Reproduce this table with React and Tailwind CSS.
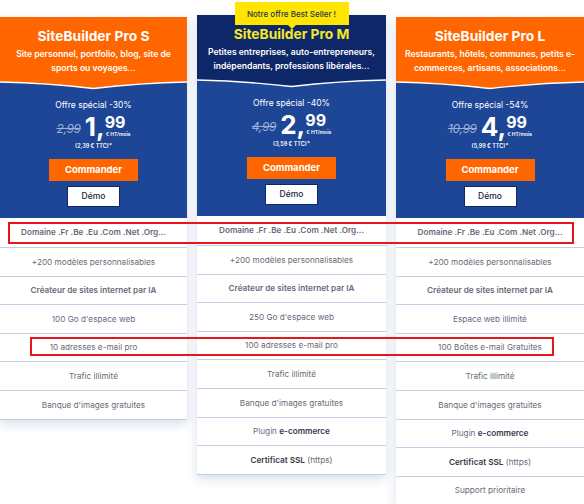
import React from "react";

const plans = [
  {
    title: "SiteBuilder Pro S",
    sub: ["Site personnel, portfolio, blog, site de", "sports ou voyages..."],
    head: "bg-[#ff6600]",
    headFill: "#ff6600",
    titleColor: "text-white",
    offer: "Offre spécial -30%",
    old: "2,99",
    int: "1",
    dec: "99",
    ttc: "(2,39 € TTC)*",
    w: "w-[187px]",
    mt: "mt-[17px]",
    features: [
      { t: "Domaine .Fr .Be .Eu .Com .Net .Org...", b: true },
      { t: "+200 modèles personnalisables" },
      { t: "Créateur de sites internet par IA", b: true },
      { t: "100 Go d'espace web" },
      { t: "10 adresses e-mail pro" },
      { t: "Trafic illimité" },
      { t: "Banque d'images gratuites" },
    ],
  },
  {
    title: "SiteBuilder Pro M",
    sub: ["Petites entreprises, auto-entrepreneurs,", "indépendants, professions libérales..."],
    head: "bg-[#0e2768]",
    headFill: "#0e2768",
    titleColor: "text-[#f6e827]",
    offer: "Offre spécial -40%",
    old: "4,99",
    int: "2",
    dec: "99",
    ttc: "(3,59 € TTC)*",
    w: "w-[189px]",
    mt: "mt-[15px]",
    badge: true,
    features: [
      { t: "Domaine .Fr .Be .Eu .Com .Net .Org...", b: true },
      { t: "+200 modèles personnalisables" },
      { t: "Créateur de sites internet par IA", b: true },
      { t: "250 Go d'espace web" },
      { t: "100 adresses e-mail pro" },
      { t: "Trafic illimité" },
      { t: "Banque d'images gratuites" },
      { t: "Plugin ", bt: "e-commerce" },
      { bp: "Certificat SSL", t: " (https)" },
    ],
  },
  {
    title: "SiteBuilder Pro L",
    sub: ["Restaurants, hôtels, communes, petits e-", "commerces, artisans, associations..."],
    head: "bg-[#ff6600]",
    headFill: "#ff6600",
    titleColor: "text-white",
    offer: "Offre spécial -54%",
    old: "10,99",
    int: "4",
    dec: "99",
    ttc: "(5,99 € TTC)*",
    w: "w-[188px]",
    mt: "mt-[17px]",
    features: [
      { t: "Domaine .Fr .Be .Eu .Com .Net .Org...", b: true },
      { t: "+200 modèles personnalisables" },
      { t: "Créateur de sites internet par IA", b: true },
      { t: "Espace web illimité" },
      { t: "100 Boîtes e-mail Gratuites" },
      { t: "Trafic illimité" },
      { t: "Banque d'images gratuites" },
      { t: "Plugin ", bt: "e-commerce" },
      { bp: "Certificat SSL", t: " (https)" },
      { t: "Support prioritaire" },
    ],
  },
];

function Wave({ fill }) {
  return (
    <svg className="block w-full h-[10px]" viewBox="0 0 100 10" preserveAspectRatio="none">
      <rect x="0" y="0" width="100" height="10" fill="#1d4697" />
      <path d="M0,0 L100,0 L100,2 Q75,3 50,8.5 Q25,3 0,2 Z" fill={fill} />
      <path d="M0,2 Q25,3 50,8.5 Q75,3 100,2" fill="none" stroke="#ffffff" strokeWidth="1.3" vectorEffect="non-scaling-stroke" />
    </svg>
  );
}

function Card({ p }) {
  return (
    <div className={`${p.w} ${p.mt} shrink-0 relative bg-white shadow-[0_4px_10px_rgba(40,70,150,0.18)]`}>
      {p.badge && (
        <div className="absolute left-1/2 -translate-x-1/2 top-[-13px] w-[114px] h-[23px] bg-[#ffe500] flex items-center justify-center text-[8px] text-[#2a3550] font-medium z-10">
          Notre offre Best Seller !
          <div className="absolute left-1/2 -translate-x-1/2 bottom-[-4px] w-0 h-0 border-l-[4px] border-r-[4px] border-t-[4px] border-l-transparent border-r-transparent border-t-[#ffe500]" />
        </div>
      )}
      <div className={`${p.head} pt-[10px] pb-[5px] text-center`}>
        <div className={`${p.titleColor} font-bold text-[13.8px] leading-[18px]`}>{p.title}</div>
        <div className="text-white font-semibold text-[8.6px] leading-[14px] mt-[2px]">
          {p.sub[0]}
          <br />
          {p.sub[1]}
        </div>
      </div>
      <Wave fill={p.headFill} />
      <div className="bg-[#1d4697] pt-[9px] pb-[11px] flex flex-col items-center">
        <div className="text-white text-[8.5px] leading-[12px]">{p.offer}</div>
        <div className="flex items-start mt-[3px] h-[28px]">
          <span className="text-[#9fb0d6] text-[12px] line-through italic mt-[6px] mr-[4px] tracking-tight">{p.old}</span>
          <span className="text-white font-bold text-[26px] leading-[26px]">{p.int},</span>
          <span className="flex flex-col">
            <span className="text-white font-bold text-[16px] leading-[16px]">{p.dec}</span>
            <span className="text-white text-[5px] leading-[6px] mt-[1px] ml-[1px] font-semibold">€ HT/mois</span>
          </span>
        </div>
        <div className="text-white text-[5.5px] leading-[7px] mt-[1px] font-semibold">{p.ttc}</div>
        <div className="mt-[9px] w-[89px] h-[22px] bg-[#ff6600] text-white font-bold text-[9.5px] flex items-center justify-center">
          Commander
        </div>
        <div className="mt-[5px] w-[53px] h-[21px] bg-white border border-[#0e2768] text-[#1b2440] text-[8.5px] font-medium flex items-center justify-center">
          Démo
        </div>
      </div>
      <div className="flex flex-col">
        {p.features.map((f, i) => (
          <div
            key={i}
            className={`${i === 0 ? "h-[30px]" : "h-[28.6px]"} border-b border-[#c5cee4] flex items-center justify-center text-[8.2px] text-[#6a6a78] ${f.b ? "font-semibold text-[#3a3a48]" : ""}`}
          >
            <span className="whitespace-pre">
              {f.bp && <span className="font-semibold text-[#3a3a48]">{f.bp}</span>}
              {f.t}
              {f.bt && <span className="font-semibold text-[#3a3a48]">{f.bt}</span>}
            </span>
          </div>
        ))}
      </div>
    </div>
  );
}

export default function App() {
  return (
    <div
      className="relative w-[584px] h-[504px] bg-white overflow-hidden"
      style={{ fontFamily: "Inter, 'Noto Sans', sans-serif" }}
    >
      <div className="flex gap-[10px] items-start">
        {plans.map((p, i) => (
          <Card key={i} p={p} />
        ))}
      </div>
      <div className="absolute left-[8px] top-[222px] w-[566px] h-[22px] border-2 border-[#e8161c] pointer-events-none" />
      <div className="absolute left-[30px] top-[337px] w-[524px] h-[19px] border-2 border-[#e8161c] pointer-events-none" />
    </div>
  );
}
